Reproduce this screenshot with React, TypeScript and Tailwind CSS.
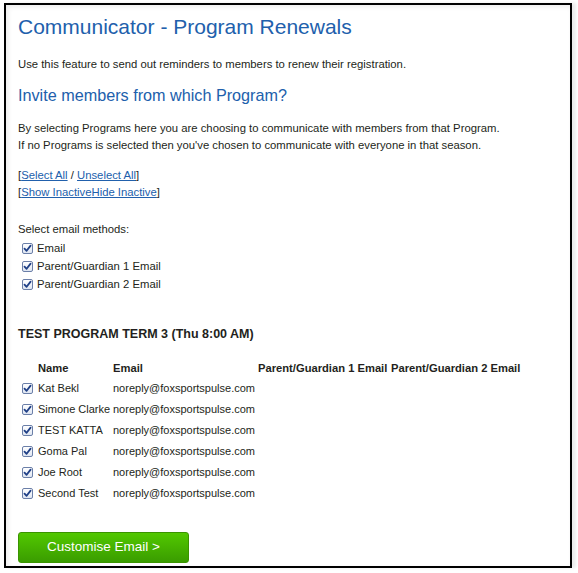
import React from "react";

function Check() {
  return (
    <span className="inline-flex items-center justify-center w-[11px] h-[11px] border border-[#6b7fa8] rounded-[2px] bg-gradient-to-b from-white to-[#dfe6f2] shrink-0">
      <svg width="9" height="9" viewBox="0 0 9 9">
        <path d="M1.5 4.6 L3.6 6.8 L7.6 1.6" fill="none" stroke="#1f3f86" strokeWidth="1.8" strokeLinecap="round" strokeLinejoin="round" />
      </svg>
    </span>
  );
}

const members = ["Kat Bekl", "Simone Clarke", "TEST KATTA", "Goma Pal", "Joe Root", "Second Test"];

export default function App() {
  return (
    <div className="w-[578px] h-[573px] bg-white pt-[3px] pl-[4px]" style={{ fontFamily: '"Liberation Sans", Arial, sans-serif' }}>
      <div className="w-[568px] h-[565px] border-2 border-black bg-white shadow-[inset_2px_2px_5px_rgba(0,0,0,0.08),4px_0_3px_rgba(0,0,0,0.08)] pl-[12px] text-[#231f20] text-[11.3px]">
        <h1 className="mt-[9px] text-[21px] leading-[26px] text-[#2160ac]">Communicator - Program Renewals</h1>
        <p className="mt-[16px] leading-[17px]">Use this feature to send out reminders to members to renew their registration.</p>
        <h2 className="mt-[11px] text-[16.2px] leading-[22px] text-[#2160ac]">Invite members from which Program?</h2>
        <div className="mt-[14px] leading-[17px]">
          <p>By selecting Programs here you are choosing to communicate with members from that Program.</p>
          <p>If no Programs is selected then you've chosen to communicate with everyone in that season.</p>
        </div>
        <div className="mt-[13px] leading-[17px]">
          <p>[<span className="text-[#2160ac] underline">Select All</span> / <span className="text-[#2160ac] underline">Unselect All</span>]</p>
          <p>[<span className="text-[#2160ac] underline">Show Inactive</span><span className="text-[#2160ac] underline">Hide Inactive</span>]</p>
        </div>
        <p className="mt-[20px] leading-[17px]">Select email methods:</p>
        <div className="mt-[1px]">
          {["Email", "Parent/Guardian 1 Email", "Parent/Guardian 2 Email"].map((t) => (
            <div key={t} className="flex items-center h-[18px] pl-[4px] gap-[4px]">
              <Check />
              <span>{t}</span>
            </div>
          ))}
        </div>
        <h3 className="mt-[32px] text-[12.5px] leading-[18px] font-bold">TEST PROGRAM TERM 3 (Thu 8:00 AM)</h3>
        <div className="mt-[15px] text-[11px]">
          <div className="flex items-center h-[20px] font-bold text-[11.2px]">
            <span className="w-[20px]" />
            <span className="w-[75px]">Name</span>
            <span className="w-[145px]">Email</span>
            <span className="w-[133px] whitespace-nowrap">Parent/Guardian 1 Email</span>
            <span className="whitespace-nowrap">Parent/Guardian 2 Email</span>
          </div>
          {members.map((m) => (
            <div key={m} className="flex items-center h-[21px]">
              <span className="w-[20px] pl-[4px] flex items-center"><Check /></span>
              <span className="w-[75px] whitespace-nowrap">{m}</span>
              <span className="w-[145px]">noreply@foxsportspulse.com</span>
            </div>
          ))}
        </div>
        <button className="mt-[28px] w-[171px] h-[31px] rounded-[3px] border border-[#3a9400] bg-gradient-to-b from-[#52c800] to-[#3a9c00] text-white text-[13.5px] flex items-center justify-center">
          Customise Email &gt;
        </button>
      </div>
    </div>
  );
}
